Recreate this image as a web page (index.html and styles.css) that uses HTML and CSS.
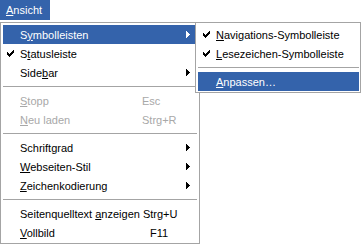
FILE: index.html
```html
<!DOCTYPE html>
<html lang="de">
<head>
<meta charset="utf-8">
<title>Ansicht</title>
<link rel="stylesheet" href="styles.css">
</head>
<body>
<div class="menubar">
  <span class="top-item active"><u>A</u>nsicht</span>
</div>

<div class="menu main">
  <div class="item hl"><span class="mark"></span><span class="label">S<u>y</u>mbolleisten</span><svg class="arrow" viewBox="0 0 4 7"><path d="M0 0h1v7h-1z M1 1h1v5h-1z M2 2h1v3h-1z M3 3h1v1h-1z"/></svg></div>
  <div class="item"><span class="mark"><svg viewBox="0 0 7 7"><path d="M6 0h1v1h-1z M5 1h2v1h-2z M0 2h1v1h-1z M4 2h3v1h-3z M0 3h2v1h-2z M3 3h3v1h-3z M0 4h5v1h-5z M1 5h3v1h-3z M2 6h1v1h-1z"/></svg></span><span class="label">S<u>t</u>atusleiste</span></div>
  <div class="item"><span class="mark"></span><span class="label">Side<u>b</u>ar</span><svg class="arrow" viewBox="0 0 4 7"><path d="M0 0h1v7h-1z M1 1h1v5h-1z M2 2h1v3h-1z M3 3h1v1h-1z"/></svg></div>
  <div class="sep"></div>
  <div class="item dis"><span class="mark"></span><span class="label"><u>S</u>topp</span><span class="key">Esc</span></div>
  <div class="item dis"><span class="mark"></span><span class="label"><u>N</u>eu laden</span><span class="key">Strg+R</span></div>
  <div class="sep"></div>
  <div class="item"><span class="mark"></span><span class="label">Schriftgrad</span><svg class="arrow" viewBox="0 0 4 7"><path d="M0 0h1v7h-1z M1 1h1v5h-1z M2 2h1v3h-1z M3 3h1v1h-1z"/></svg></div>
  <div class="item"><span class="mark"></span><span class="label"><u>W</u>ebseiten-Stil</span><svg class="arrow" viewBox="0 0 4 7"><path d="M0 0h1v7h-1z M1 1h1v5h-1z M2 2h1v3h-1z M3 3h1v1h-1z"/></svg></div>
  <div class="item"><span class="mark"></span><span class="label"><u>Z</u>eichenkodierung</span><svg class="arrow" viewBox="0 0 4 7"><path d="M0 0h1v7h-1z M1 1h1v5h-1z M2 2h1v3h-1z M3 3h1v1h-1z"/></svg></div>
  <div class="sep"></div>
  <div class="item"><span class="mark"></span><span class="label wide">Seitenquelltext <u>a</u>nzeigen</span><span class="key">Strg+U</span></div>
  <div class="item"><span class="mark"></span><span class="label"><u>V</u>ollbild</span><span class="key shifted">F11</span></div>
</div>

<div class="menu sub">
  <div class="item"><span class="mark"><svg viewBox="0 0 7 7"><path d="M6 0h1v1h-1z M5 1h2v1h-2z M0 2h1v1h-1z M4 2h3v1h-3z M0 3h2v1h-2z M3 3h3v1h-3z M0 4h5v1h-5z M1 5h3v1h-3z M2 6h1v1h-1z"/></svg></span><span class="label"><u>N</u>avigations-Symbolleiste</span></div>
  <div class="item"><span class="mark"><svg viewBox="0 0 7 7"><path d="M6 0h1v1h-1z M5 1h2v1h-2z M0 2h1v1h-1z M4 2h3v1h-3z M0 3h2v1h-2z M3 3h3v1h-3z M0 4h5v1h-5z M1 5h3v1h-3z M2 6h1v1h-1z"/></svg></span><span class="label"><u>L</u>esezeichen-Symbolleiste</span></div>
  <div class="sep"></div>
  <div class="item hl"><span class="mark"></span><span class="label"><u>A</u>npassen…</span></div>
</div>
</body>
</html>
```

FILE: styles.css
```css
* {
  box-sizing: border-box;
}

html,
body {
  margin: 0;
  padding: 0;
  background: #ffffff;
}

body {
  position: relative;
  width: 361px;
  height: 245px;
  overflow: hidden;
  font-family: "Liberation Sans", Arial, sans-serif;
  font-size: 11px;
  color: #000000;
}

u {
  text-decoration: underline;
  text-underline-offset: 1px;
}

.menubar {
  display: flex;
  height: 22px;
}

.top-item {
  display: flex;
  align-items: center;
  width: 50px;
  height: 20px;
  padding-left: 6px;
}

.active {
  background: #3463ab;
  color: #ffffff;
}

.menu {
  background: #ffffff;
  border: 1px solid #a4a4a4;
}

.main {
  width: 200px;
  padding: 2px 2px 1px 2px;
}

.sub {
  position: absolute;
  left: 195px;
  top: 22px;
  width: 166px;
  padding: 2px 1px 1px 2px;
}

.item {
  display: flex;
  align-items: center;
  height: 19px;
  white-space: nowrap;
}

.mark {
  flex: none;
  display: flex;
  align-items: center;
}

.main .mark {
  width: 17px;
  padding-left: 4px;
}

.sub .mark {
  width: 18px;
  padding-left: 5px;
}

.mark svg {
  display: block;
  width: 7px;
  height: 7px;
  fill: currentColor;
  shape-rendering: crispEdges;
}

.main .label {
  flex: none;
  width: 122px;
}

.main .label.wide {
  width: auto;
  margin-right: 3px;
}

.key.shifted {
  margin-left: 8px;
}

.arrow {
  flex: none;
  width: 4px;
  height: 7px;
  margin-left: auto;
  margin-right: 7px;
  fill: currentColor;
  shape-rendering: crispEdges;
}

.sep {
  height: 9px;
  padding-top: 4px;
}

.sep::before {
  content: "";
  display: block;
  height: 1px;
  background: #a4a4a4;
}

.dis {
  color: #a8a8a8;
}

.hl {
  background: #3463ab;
  color: #ffffff;
}
```
